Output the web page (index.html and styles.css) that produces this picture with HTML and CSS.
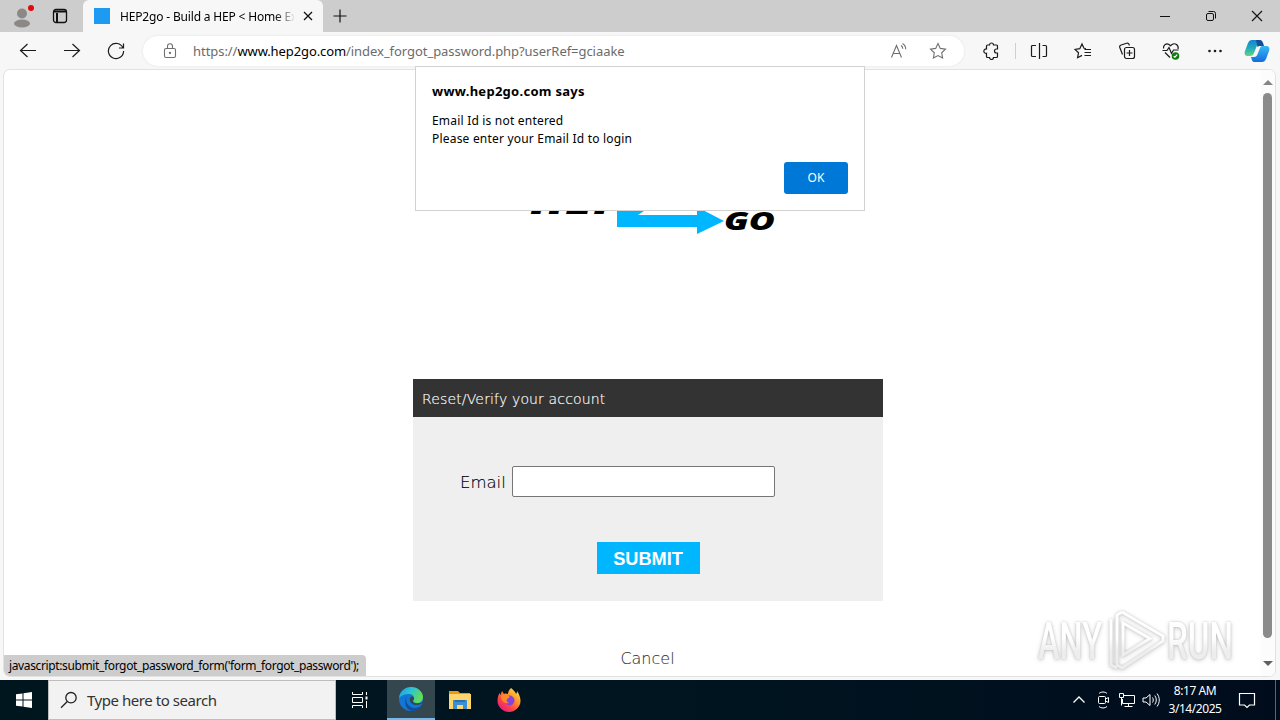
FILE: index.html
```html
<!DOCTYPE html>
<html lang="en">
<head>
    <meta charset="UTF-8">
    <meta name="viewport" content="width=device-width, initial-scale=1.0">
    <title>HEP2go - Build a HEP</title>
    <link rel="stylesheet" href="styles.css">
</head>
<body>
    <div class="tab-bar">
        <div class="profile">
            <svg width="24" height="28" viewBox="0 0 24 28">
                <circle cx="12" cy="11.500" r="5" fill="#8c8886"/>
                <ellipse cx="12" cy="21.500" rx="8" ry="4" fill="#8c8886"/>
                <circle cx="21" cy="6" r="3" fill="#e00b0b"/>
            </svg>
        </div>
        <div class="tab-actions">
            <svg width="16" height="16" viewBox="0 0 16 16" fill="none" stroke="#111" stroke-width="1.300">
                <rect x="1.500" y="1.500" width="13" height="13" rx="2.500"/>
                <path d="M2 3.500h12M5 5v9" stroke-width="2"/>
            </svg>
        </div>
        <div class="tab">
            <span class="favicon"></span>
            <span class="tab-title">HEP2go - Build a HEP &lt; Home Ex</span>
            <svg class="tab-close" width="10" height="10" viewBox="0 0 10 10" stroke="#111" stroke-width="1.300"><path d="M1 1l8 8M9 1l-8 8"/></svg>
        </div>
        <svg class="new-tab" width="14" height="14" viewBox="0 0 14 14" stroke="#111" stroke-width="1.200"><path d="M7 .5v13M.5 7h13"/></svg>
        <div class="window-buttons">
            <svg width="46" height="32" viewBox="0 0 46 32" stroke="#111"><path d="M18 16.500h10"/></svg>
            <svg width="46" height="32" viewBox="0 0 46 32" fill="none" stroke="#111"><rect x="18.500" y="13.500" width="7" height="7" rx="1.500"/><path d="M20.500 11.500h5a2 2 0 0 1 2 2v5"/></svg>
            <svg width="46" height="32" viewBox="0 0 46 32" stroke="#111" stroke-width="1.100"><path d="M18 11l10 10M28 11l-10 10"/></svg>
        </div>
    </div>

    <div class="toolbar">
        <div class="tool">
            <svg width="18" height="18" viewBox="0 0 18 18"><path d="M17 8.500H1.500M8.500 2L1.500 8.500l7 6.500"/></svg>
        </div>
        <div class="tool">
            <svg width="18" height="18" viewBox="0 0 18 18"><path d="M1 8.500h15.500M9.500 2l7 6.500-7 6.500"/></svg>
        </div>
        <div class="tool">
            <svg width="18" height="18" viewBox="0 0 18 18"><path d="M16 6A7.600 7.600 0 1 0 16.600 9M16.500 1.500V6H12"/></svg>
        </div>
        <div class="address-bar">
            <svg class="lock" width="14" height="16" viewBox="0 0 14 16"><rect x="1.500" y="5.500" width="11" height="9" rx="1.500"/><path d="M4.500 5.500V3.200a2.500 2.500 0 0 1 5 0v2.300"/><circle cx="7" cy="10" r=".6"/></svg>
            <span class="url">https://<b>www.hep2go.com</b>/index_forgot_password.php?userRef=gciaake</span>
            <svg class="read-aloud" width="18" height="18" viewBox="0 0 18 18"><path d="M1.500 15.500l5-12 5 12M3.200 11.500h6.600M11 3.500a4 4 0 0 1 1.800 3.200M12.500 1.500a6.500 6.500 0 0 1 3.200 5.700"/></svg>
            <svg class="star" width="18" height="18" viewBox="0 0 18 18"><path d="M9 1.500l2.300 4.900 5.200.7-3.800 3.700.9 5.300L9 13.600l-4.600 2.500.9-5.300L1.500 7.100l5.200-.7z"/></svg>
        </div>
        <div class="tool tool-puzzle">
            <svg width="18" height="18" viewBox="0 0 18 18"><path d="M4.500 4a1 1 0 0 1 1-1h2a2 2 0 0 1 4 0h3a1 1 0 0 1 1 1v3h-1a2 2 0 0 0 0 4h1v3.500a1 1 0 0 1-1 1h-3a2 2 0 0 1-4 0h-2a1 1 0 0 1-1-1V11.300a2.200 2.200 0 1 1 0-4.300z"/></svg>
        </div>
        <span class="separator"></span>
        <div class="tool">
            <svg width="18" height="18" viewBox="0 0 18 18"><path d="M9.500 1v16M6 3.500H2.500a1 1 0 0 0-1 1v9a1 1 0 0 0 1 1H6M12.500 3.500H15.500a1 1 0 0 1 1 1v9a1 1 0 0 1-1 1H12.500"/></svg>
        </div>
        <div class="tool">
            <svg width="18" height="18" viewBox="0 0 18 18"><path d="M12 6.500l-2-.2-2-4.300-2.200 4.700-4.800.7 3.500 3.400-.9 4.900L8 13.400M10.500 7.500H17M10.500 10.500H17M10.500 13.500H17"/></svg>
        </div>
        <div class="tool">
            <svg width="18" height="18" viewBox="0 0 18 18"><rect x="6.500" y="5.500" width="10" height="11" rx="2"/><path d="M11.500 8v6M8.500 11h6M4.500 12.500l-2.700-7a2 2 0 0 1 1.300-2.500l5.500-1.700a2 2 0 0 1 2.500 1.200l.4 1"/></svg>
        </div>
        <div class="tool">
            <svg width="20" height="18" viewBox="0 0 20 18"><path d="M2.500 6.500C2 3 5.500.8 8 2.500l1.500 1.300L11 2.500c3-2 7 .7 6 4.500M1.500 8.500H6l2-3 2.500 6 2-3.500h5M4 10.500l5 5"/><circle cx="14.500" cy="14" r="3.800" fill="#107c10" stroke="none"/><path d="M12.700 14.200l1.200 1 2.300-2.600" stroke="#fff"/></svg>
        </div>
        <div class="tool">
            <svg class="dots" width="18" height="18" viewBox="0 0 18 18"><circle cx="3.500" cy="9" r="1.300"/><circle cx="9" cy="9" r="1.300"/><circle cx="14.500" cy="9" r="1.300"/></svg>
        </div>
        <div class="copilot">
            <svg width="26" height="24" viewBox="0 0 26 24">
                <defs>
                    <linearGradient id="copilotLeft" x1="0" y1="0" x2="0" y2="1"><stop offset="0" stop-color="#1583c8"/><stop offset=".5" stop-color="#20aac4"/><stop offset="1" stop-color="#65d477"/></linearGradient>
                    <linearGradient id="copilotRight" x1="0" y1="0" x2="0" y2="1"><stop offset="0" stop-color="#37b9f5"/><stop offset="1" stop-color="#136bde"/></linearGradient>
                </defs>
                <path d="M8 1h7c3 0 3 2 4 4h-3c-2 0-3 1-3.600 3L10 14c-.6 2-2 3-4 3H4c-3 0-4-2-3-5l3-8c1-2 2-3 4-3z" fill="url(#copilotLeft)"/>
                <path d="M12 1h4c2 0 3 2 4 6h-4c-1 0-2 .5-2.500 1z" fill="#174e9a"/>
                <path d="M18 7h4c3 0 4 2 3 5l-3 8c-1 2-2 3-4 3h-7c-3 0-3-2-4-5h3c2 0 3-1 3.600-3l2.400-6c.4-1 1-2 2-2z" fill="url(#copilotRight)"/>
            </svg>
        </div>
    </div>

    <div class="viewport">
        <div class="page">
            <svg class="logo" width="250" height="66" viewBox="0 0 250 66">
                <text class="logo-text" x="4" y="43" font-size="44" textLength="94" lengthAdjust="spacingAndGlyphs">HEP</text>
                <path d="M91 11h80v16l-53 13-6 4h59v-8l27 14-27 13v-7H91V35l50-12H91z" fill="#00b7ff"/>
                <text class="logo-text" x="198" y="59" font-size="24" textLength="51" lengthAdjust="spacingAndGlyphs">GO</text>
            </svg>
            <form class="reset-box">
                <div class="reset-header">Reset/Verify your account</div>
                <div class="reset-body">
                    <div class="email-row">
                        <label for="email">Email</label>
                        <input type="text" id="email">
                    </div>
                    <button type="button" class="submit">SUBMIT</button>
                </div>
            </form>
            <a class="cancel">Cancel</a>
        </div>
        <div class="scrollbar">
            <span class="arrow-up"></span>
            <span class="thumb"></span>
            <span class="arrow-down"></span>
        </div>
        <div class="status">javascript:submit_forgot_password_form('form_forgot_password');</div>
    </div>

    <div class="dialog">
        <div class="dialog-title">www.hep2go.com says</div>
        <div class="dialog-text">Email Id is not entered<br>Please enter your Email Id to login</div>
        <button type="button" class="ok">OK</button>
    </div>

    <svg class="watermark" width="210" height="70" viewBox="0 0 210 70">
        <defs>
            <linearGradient id="fade" gradientUnits="userSpaceOnUse" x1="0" y1="0" x2="0" y2="70"><stop offset=".45" stop-color="#fff"/><stop offset=".65" stop-color="#ededed"/></linearGradient>
        </defs>
        <text x="8" y="53" fill="url(#fade)" textLength="64" lengthAdjust="spacingAndGlyphs">ANY</text>
        <text x="137" y="53" fill="url(#fade)" textLength="66" lengthAdjust="spacingAndGlyphs">RUN</text>
        <path d="M92 6l41 24v5L92 62l-5-3V12M93 17v32l27-16.500zM92 6l-5 3v3M81 13v46l6 3" stroke="url(#fade)"/>
    </svg>

    <div class="taskbar">
        <div class="start">
            <svg width="16" height="16" viewBox="0 0 16 16" fill="#fff"><path d="M0 2.300l6.500-.9v6.100H0zM7.500 1.200L16 0v7.500H7.500zM0 8.500h6.500v6.100L0 13.700zM7.500 8.500H16V16l-8.500-1.200z"/></svg>
        </div>
        <div class="search">
            <svg width="18" height="18" viewBox="0 0 18 18" fill="none" stroke="#222" stroke-width="1.300"><circle cx="11" cy="6.700" r="5.200"/><path d="M7.300 10.500L1 16.700"/></svg>
            <span>Type here to search</span>
        </div>
        <div class="task task-view">
            <svg width="18" height="18" viewBox="0 0 18 18" fill="none" stroke="#fff"><path d="M1.500 1v2.500h10V1M1.500 17v-2.500h10V17M1.500 6.500h10v5h-10zM15.500 1v3M15.500 10v7"/><path d="M14.500 5.500h2v3h-2z" fill="#fff" stroke="none"/></svg>
        </div>
        <div class="task task-active">
            <svg width="26" height="26" viewBox="0 0 26 26">
                <defs>
                    <linearGradient id="edgeTop" x1="0" y1="0" x2="1" y2=".4"><stop offset="0" stop-color="#1b9de2"/><stop offset=".5" stop-color="#2cc3d5"/><stop offset="1" stop-color="#63dc57"/></linearGradient>
                </defs>
                <circle cx="13" cy="13" r="12" fill="#1277d2"/>
                <path d="M1 12C2 5 7 1 13 1c7 0 12 5 12 10 0 4-3 6-6 6-2 0-4-1-4-2 0-1 1-1 1-3 0-2-2-4-5-4-5 0-8 2-10 4z" fill="url(#edgeTop)"/>
                <path d="M9 10c-3 6 2 12 8 12 3 0 5-1 7-3-2 4-6 6-10 6-6-1-9-9-5-15z" fill="#124f9b"/>
                <path d="M12 12c-1 4 2 7 6 7 3 0 5-1 7-2v-1c-2 1-4 1.500-6 1.500-3 0-4-1.500-4-2.500 0-1 1-1 1-3-1-2-3-2-4 0z" fill="#34474f"/>
            </svg>
        </div>
        <div class="task">
            <svg width="24" height="22" viewBox="0 0 24 22"><path d="M1 2h9l2 2h10v4H1z" fill="#e89a17"/><path d="M1 5h22v15H1z" fill="#ffd66b"/><path d="M5 20v-9h14v9h-4v-4H9v4z" fill="#3b8fd4"/><path d="M7 11h10v2H7z" fill="#2471b7"/></svg>
        </div>
        <div class="task">
            <svg width="26" height="26" viewBox="0 0 26 26">
                <defs>
                    <linearGradient id="firefox" x1="1" y1="0" x2=".2" y2="1"><stop offset="0" stop-color="#fff44f"/><stop offset=".4" stop-color="#ff9a2a"/><stop offset=".7" stop-color="#ff4545"/><stop offset="1" stop-color="#e31587"/></linearGradient>
                </defs>
                <path d="M15 1c2 2 4 3 5 6 1-1 1-2 1-3 2 3 3.500 6 3.500 10C24.500 20 19 25 13 25S1.500 20 1.500 14c0-4 1-6 2-8l1 2L6 4l2 3c2-1 3 0 4 0 0-2 1-4 3-6z" fill="url(#firefox)"/>
                <circle cx="13.500" cy="13.500" r="5" fill="#8445dc"/>
                <path d="M5 9c3-2 6-2 9 1l-3 2c-1 2 0 3 2 4-3 1-8-1-8-7z" fill="#ff8a28"/>
            </svg>
        </div>
        <div class="tray">
            <svg width="24" height="20" viewBox="0 0 24 20"><path d="M6.500 12.500L12 7l5.500 5.500" stroke-width="1.300"/></svg>
            <svg width="24" height="20" viewBox="0 0 24 20"><rect x="7.500" y="6.500" width="7" height="7" rx="1"/><path d="M14.500 9l3-1.500v5L14.500 11M8 3.500c2-2 6-2 8 0M8 16.500c2 2 6 2 8 0"/></svg>
            <svg width="24" height="20" viewBox="0 0 24 20"><path d="M9 5.500h10.500v8H7.500V9M4.500 3.500h4v4h-4zM6.500 7.500v8M13.500 13.500v3M9.500 16.500h8"/></svg>
            <svg width="24" height="20" viewBox="0 0 24 20"><path d="M4 8h3l4-3.500v11L7 12H4zM13.500 7.500c1 1.500 1 3.500 0 5M15.800 5.500c2 3 2 6 0 9M18 3.500c3 4 3 9 0 13"/></svg>
        </div>
        <div class="clock">
            <div>8:17 AM</div>
            <div class="date">3/14/2025</div>
        </div>
        <svg class="notify" width="18" height="18" viewBox="0 0 18 18" fill="none" stroke="#fff" stroke-width="1.200"><path d="M1.500 2.500h15v11.500h-5L9 16.500 6.500 14h-5z"/></svg>
        <span class="show-desktop"></span>
    </div>
</body>
</html>
```
FILE: styles.css
```css
* {
    box-sizing: border-box;
}
body {
    margin: 0;
    width: 1280px;
    height: 720px;
    display: flex;
    flex-direction: column;
    overflow: hidden;
    background-color: #f7f7f7;
    font-family: "Noto Sans", "Open Sans", sans-serif;
    color: #000;
}
svg {
    display: block;
    flex-shrink: 0;
}
.tab-bar {
    display: flex;
    align-items: center;
    height: 32px;
    flex-shrink: 0;
    background-color: #cdcdcd;
}
.profile {
    width: 40px;
    padding-left: 10px;
}
.tab-actions {
    width: 43px;
    padding-left: 12px;
}
.tab {
    display: flex;
    align-items: center;
    width: 240px;
    height: 32px;
    padding-left: 11px;
    background-color: #f7f7f7;
    border-radius: 6px 6px 0 0;
}
.favicon {
    width: 16px;
    height: 16px;
    background-color: #1d9bf0;
}
.tab-title {
    width: 174px;
    margin-left: 10px;
    overflow: hidden;
    white-space: nowrap;
    font-size: 12px;
    letter-spacing: -0.17px;
    -webkit-mask-image: linear-gradient(to right, #000 155px, transparent 176px);
    mask-image: linear-gradient(to right, #000 155px, transparent 176px);
}
.tab-close {
    margin-left: 9px;
}
.new-tab {
    margin-left: 10px;
}
.window-buttons {
    display: flex;
    margin-left: auto;
}

/* toolbar */
.toolbar {
    display: flex;
    align-items: center;
    height: 37px;
    flex-shrink: 0;
    padding-left: 6px;
}
.tool {
    display: flex;
    justify-content: center;
    width: 44px;
    flex-shrink: 0;
}
.tool svg {
    fill: none;
    stroke: #1b1b1b;
    stroke-width: 1.2;
}
.tool .dots {
    fill: #1b1b1b;
    stroke: none;
}
.address-bar {
    display: flex;
    align-items: center;
    width: 821px;
    height: 30px;
    flex-shrink: 0;
    margin-left: 5px;
    padding-left: 20px;
    background-color: #fff;
    border-radius: 15px;
    box-shadow: 0 0 3px rgba(0, 0, 0, 0.08);
}
.address-bar svg {
    fill: none;
    stroke: #707070;
    stroke-width: 1.1;
}
.url {
    margin-left: 16px;
    font-size: 13px;
    letter-spacing: -0.05px;
    color: #6b6b6b;
    white-space: nowrap;
}
.url b {
    font-weight: normal;
    letter-spacing: -0.1px;
    color: #000;
}
.read-aloud {
    margin-left: auto;
}
.star {
    margin: 0 17px 0 21px;
}
.toolbar .tool-puzzle {
    width: 42px;
    margin-left: 6px;
}
.separator {
    width: 1px;
    height: 16px;
    margin: 0 1px 0 3px;
    background-color: #cfcfcf;
}
.copilot {
    margin-left: 7px;
}

/* web page */
.viewport {
    position: relative;
    display: flex;
    height: 608px;
    margin: 0 4px 3px 3px;
    flex-shrink: 0;
    background-color: #fff;
    border: 1px solid #e2e2e2;
    border-radius: 7px;
    overflow: hidden;
}
.page {
    flex: 1;
    display: flex;
    flex-direction: column;
    align-items: center;
    padding: 101px 0 0 31px;
}
.logo {
    margin-left: 6px;
}
.logo-text {
    font-family: "Open Sans", "Noto Sans", sans-serif;
    font-weight: 800;
    font-style: italic;
}
.reset-box {
    width: 470px;
    height: 222px;
    margin: 142px 0 0 0;
    background-color: #efefef;
    font-family: "DejaVu Sans", sans-serif;
    font-weight: 200;
}
.reset-header {
    height: 38px;
    padding-left: 9px;
    line-height: 40px;
    font-size: 14px;
    letter-spacing: 0.15px;
    background-color: #333;
    color: #fff;
    -webkit-text-stroke: 0.15px #fff;
}
.reset-body {
    display: flex;
    flex-direction: column;
    align-items: center;
    padding-top: 49px;
}
.email-row {
    display: flex;
    align-items: center;
    align-self: flex-start;
    padding-left: 47px;
}
.email-row label {
    width: 52px;
    padding-top: 1px;
    font-size: 16.5px;
    -webkit-text-stroke: 0.15px #000;
}
.email-row input {
    width: 263px;
    height: 31px;
    border: 1px solid #767676;
    border-radius: 2px;
    background-color: #fff;
}
.submit {
    width: 103px;
    height: 32px;
    margin-top: 45px;
    padding: 2px 0 0 0;
    border: none;
    background-color: #00b7ff;
    color: #fff;
    font-family: "Liberation Sans", sans-serif;
    font-size: 18.2px;
    font-weight: bold;
}
.cancel {
    margin: 48px 0 0 -1px;
    font-family: "DejaVu Sans", sans-serif;
    font-weight: 200;
    font-size: 16px;
    color: #333;
    -webkit-text-stroke: 0.1px #333;
}
.scrollbar {
    display: flex;
    flex-direction: column;
    align-items: center;
    width: 14px;
    padding: 10px 1px 10px 0;
    background-color: #fcfcfc;
}
.thumb {
    flex: 1;
    width: 9px;
    margin: 8px 0 23px;
    border-radius: 5px;
    background-color: #8b8b8b;
}
.arrow-up,
.arrow-down {
    border: 5px solid transparent;
}
.arrow-up {
    border-top: none;
    border-bottom: 5px solid #858585;
}
.arrow-down {
    border-bottom: none;
    border-top: 5px solid #606060;
}
.status {
    position: absolute;
    left: 0;
    bottom: 0;
    width: 362px;
    height: 21px;
    padding-left: 5px;
    line-height: 21px;
    font-size: 12px;
    letter-spacing: -0.37px;
    white-space: nowrap;
    background-color: #cdcdcd;
    border-top-right-radius: 4px;
}

/* alert box over the page */
.dialog {
    position: absolute;
    left: 415px;
    top: 66px;
    width: 450px;
    height: 145px;
    padding: 14px 16px;
    background-color: #fff;
    border: 1px solid #d2d2d2;
}
.dialog-title {
    font-size: 13px;
    font-weight: bold;
    line-height: 20px;
    letter-spacing: 0.28px;
}
.dialog-text {
    margin-top: 11px;
    font-size: 12px;
    line-height: 18px;
    letter-spacing: 0.2px;
}
.ok {
    display: block;
    width: 64px;
    height: 32px;
    margin: 14px 0 0 auto;
    padding: 0 0 1px;
    border: none;
    border-radius: 3px;
    background-color: #0078d7;
    color: #fff;
    font-family: inherit;
    font-size: 12px;
}
.watermark {
    position: absolute;
    left: 1030px;
    top: 606px;
    filter: drop-shadow(0 0 1px rgba(0, 0, 0, 0.15)) drop-shadow(0 1px 2px rgba(0, 0, 0, 0.2));
}
.watermark text {
    font-family: Roboto, sans-serif;
    font-size: 51px;
    font-weight: 500;
}
.watermark path {
    fill: none;
    stroke-width: 3;
}

/* taskbar */
.taskbar {
    display: flex;
    align-items: center;
    height: 40px;
    flex-shrink: 0;
    background: linear-gradient(to right, #00161e, #001420 60%, #000c1c);
    color: #fff;
}
.start {
    width: 48px;
    padding-left: 16px;
}
.search {
    display: flex;
    align-items: center;
    width: 288px;
    height: 40px;
    padding-left: 11px;
    border: 1px solid #bdbdbd;
    background-color: #f2f2f2;
    color: #333;
    font-size: 15px;
}
.search span {
    margin-left: 9px;
    letter-spacing: -0.45px;
}
.task {
    display: flex;
    align-items: center;
    justify-content: center;
    width: 49px;
    height: 40px;
}
.task-view {
    width: 48px;
    margin-right: 3px;
}
.task-active {
    width: 48px;
    background-color: #34474f;
    border-bottom: 2px solid #76b9ed;
}
.tray {
    display: flex;
    margin-left: auto;
    fill: none;
    stroke: #fff;
}
.clock {
    width: 64px;
    text-align: center;
    font-size: 12px;
    line-height: 18px;
    letter-spacing: -0.45px;
}
.notify {
    margin: 0 19px 0 11px;
}
.show-desktop {
    width: 5px;
    height: 40px;
    border-left: 1px solid #5a6470;
}
```
